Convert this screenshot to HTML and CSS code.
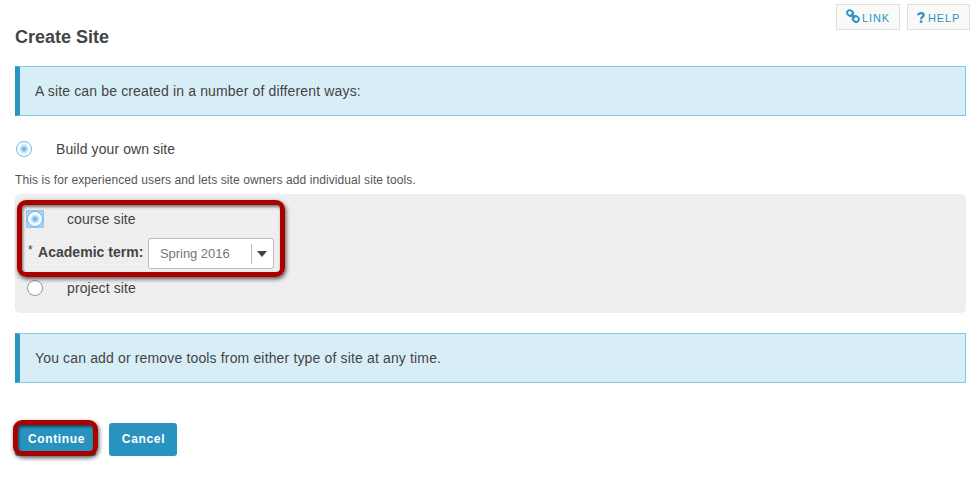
FILE: index.html
```html
<!DOCTYPE html>
<html lang="en">
<head>
<meta charset="utf-8">
<title>Create Site</title>
<link rel="stylesheet" href="styles.css">
</head>
<body>
<main class="page">
  <nav class="tools">
    <a class="tool"><svg class="link-icon" width="14" height="14" viewBox="0 0 14 14"><g fill="none" stroke="currentColor" stroke-width="1.9"><rect x="1" y="1.4" width="6.2" height="5.2" rx="2.5" transform="rotate(42 4 4)"/><rect x="6.7" y="7.4" width="6.2" height="5.2" rx="2.5" transform="rotate(42 9.9 9.9)"/><path d="M4.9 4.9l4.2 4.2"/></g></svg><span>LINK</span></a>
    <a class="tool"><svg class="help-icon" width="8" height="11" viewBox="0 0 8 11"><path d="M1 3.2C1.4 1.8 2.4 1.1 3.9 1.1c1.7 0 2.8.8 2.8 2.1 0 1.8-2.6 1.7-2.6 4" fill="none" stroke="currentColor" stroke-width="2.2"/><path d="M2.8 8.4h2.5v2.4H2.8z" fill="currentColor"/></svg><span>HELP</span></a>
  </nav>
  <h1>Create Site</h1>
  <p class="notice">A site can be created in a number of different ways:</p>
  <label class="choice build"><i class="radio on"></i><span>Build your own site</span></label>
  <p class="hint">This is for experienced users and lets site owners add individual site tools.</p>
  <section class="panel">
    <div class="mark mark-term"></div>
    <label class="choice"><i class="radio on focus"></i><span>course site</span></label>
    <div class="term">
      <span class="star">*</span><b>Academic term:</b>
      <div class="select"><span>Spring 2016</span><i class="caret"></i></div>
    </div>
    <label class="choice"><i class="radio"></i><span>project site</span></label>
  </section>
  <p class="notice second">You can add or remove tools from either type of site at any time.</p>
  <div class="actions">
    <div class="btn primary"><span>Continue</span><div class="mark mark-continue"></div></div>
    <div class="btn"><span>Cancel</span></div>
  </div>
</main>
</body>
</html>
```
FILE: styles.css
```css
* { box-sizing: border-box; }
body {
  margin: 0;
  background: #fff;
  color: #444;
  font: 14px/20px "Liberation Sans", Arial, sans-serif;
}
h1, p { margin: 0; }
.page {
  position: relative;
  height: 478px;
  padding: 26px 13px 0 15px;
  overflow: hidden;
}
.tools {
  position: absolute;
  top: 4px;
  right: 9px;
  display: flex;
  gap: 7px;
}
.tool {
  display: flex;
  align-items: center;
  height: 26px;
  border: 1px solid #dfdfdf;
  background: #f9f9f8;
  color: #2993c0;
  font-size: 11px;
  letter-spacing: .9px;
}
.tool:first-child { width: 64px; padding-left: 9px; }
.tool:last-child { width: 63px; padding-left: 9px; }
.tool span { padding-top: 2px; }
.link-icon { margin: -2px 2px 0 0; }
.help-icon { margin: 0 3px 0 0; }
h1 { font-size: 18px; line-height: 22px; height: 40px; }
.notice {
  height: 50px;
  padding-left: 15px;
  line-height: 48px;
  border: 1px solid #84c8e2;
  border-left: 5px solid #2996c2;
  background: #d8eef7;
  letter-spacing: .15px;
}
.choice { display: flex; align-items: center; height: 20px; letter-spacing: .09px; }
.radio {
  width: 16px;
  height: 16px;
  margin-right: 24px;
  border: 1px solid #999;
  border-radius: 50%;
  background: #fff;
}
.radio.on {
  border-color: #6bb3e6;
  background: radial-gradient(circle, #5aabe2 0, #7dbdec 1.5px, #b5dbf5 3px, #e2f2fd 4.5px, #fff 5.5px);
}
.radio.focus {
  position: relative;
  width: 18px;
  height: 18px;
  margin: 0 23px 0 -1px;
  border: 1px solid #8fc5ef;
  border-radius: 1px;
  background: #a9d3f3;
}
.radio.focus::before {
  content: "";
  position: absolute;
  inset: 0;
  border: 1px solid #6bb3e6;
  border-radius: 50%;
  background: radial-gradient(circle, #5aabe2 0, #7dbdec 1.5px, #b5dbf5 3px, #e2f2fd 4.5px, #fff 5.5px);
}
.build { margin: 23px 0 11px 1px; }
.hint { height: 24px; font-size: 12px; line-height: 20px; color: #555; letter-spacing: .094px; }
.panel {
  position: relative;
  height: 119px;
  padding: 15px 0 0 12px;
  border-radius: 5px;
  background:
    radial-gradient(circle at .5px .5px, #e6e6e6 .6px, transparent .7px) 0 0 / 4px 8px,
    radial-gradient(circle at 2.5px 4.5px, #e6e6e6 .6px, transparent .7px) 0 0 / 4px 8px,
    #efefef;
}
.term { display: flex; height: 49px; padding-top: 9px; }
.star { width: 10px; padding: 2px 0 0 1px; font-size: 12px; line-height: 20px; }
.term b { width: 110px; margin-left: 1px; line-height: 28px; letter-spacing: .03px; }
.select {
  display: flex;
  align-items: center;
  width: 126px;
  height: 31px;
  padding-left: 11px;
  border: 1px solid #bbb;
  border-radius: 3px;
  background: #fff;
  color: #777;
  font-size: 13px;
}
.select span { width: 92px; height: 20px; border-right: 1px solid #bbb; letter-spacing: -.05px; }
.caret { margin-left: 5px; border: 5.5px solid transparent; border-top: 6px solid #444; border-bottom: 0; }
.second { margin-top: 20px; }
.actions { display: flex; gap: 13px; margin-top: 40px; }
.btn {
  position: relative;
  width: 68px;
  height: 33px;
  padding-left: 1px;
  border-radius: 3px;
  background: #2993c0;
  color: #fff;
  text-align: center;
  font-size: 12px;
  font-weight: bold;
  line-height: 32px;
  letter-spacing: .65px;
}
.primary { width: 81px; padding-left: 2px; }
.mark {
  position: absolute;
  border: 5px solid #ab0000;
  border-radius: 9px;
  box-shadow: 1px 2px 4px rgba(0,0,0,.65), inset 1px 2px 3px rgba(0,0,0,.5);
}
.mark-term { left: 2px; top: 6px; width: 268px; height: 77px; }
.mark-continue { left: -2px; top: -3px; width: 85px; height: 36px; }
```
